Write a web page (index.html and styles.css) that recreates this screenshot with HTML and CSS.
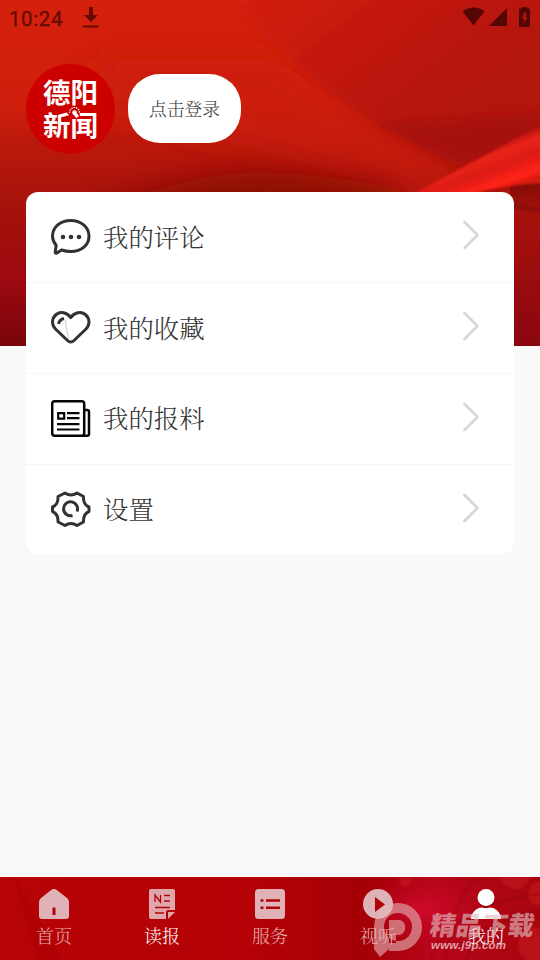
FILE: index.html
```html
<!DOCTYPE html>
<html lang="zh-CN">
<head>
<meta charset="utf-8">
<title>我的</title>
<link rel="stylesheet" href="styles.css">
</head>
<body>
<div class="app">
  <svg class="hero-art" viewBox="0 0 540 346" preserveAspectRatio="none" aria-hidden="true">
    <defs>
      <linearGradient id="base" x1="0" y1="0" x2="0" y2="1">
        <stop offset="0" stop-color="#d5210c"/><stop offset=".3" stop-color="#cf1f0c"/><stop offset=".41" stop-color="#bb190c"/><stop offset=".55" stop-color="#aa150b"/><stop offset=".68" stop-color="#a00e0b"/><stop offset=".8" stop-color="#9e0a10"/><stop offset="1" stop-color="#78050b"/>
      </linearGradient>
      <linearGradient id="sheet" gradientUnits="userSpaceOnUse" x1="270" y1="-20" x2="400" y2="150">
        <stop offset="0" stop-color="#d3200c"/><stop offset=".25" stop-color="#cb1b0b"/><stop offset=".7" stop-color="#ba150c"/><stop offset="1" stop-color="#b3120c"/>
      </linearGradient>
      <linearGradient id="right" x1="0" y1="0" x2="0" y2="1">
        <stop offset="0" stop-color="#7f0c08"/><stop offset=".2" stop-color="#a7110c"/><stop offset="1" stop-color="#8b0710"/>
      </linearGradient>
      <linearGradient id="ray" gradientUnits="userSpaceOnUse" x1="475" y1="150" x2="492" y2="195">
        <stop offset="0" stop-color="#b0130c"/><stop offset=".22" stop-color="#ea2218"/><stop offset=".5" stop-color="#dc1e12"/><stop offset=".85" stop-color="#ff2115"/><stop offset="1" stop-color="#d81b10"/>
      </linearGradient>
      <filter id="soft" x="-40%" y="-100%" width="180%" height="300%"><feGaussianBlur stdDeviation="16"/></filter>
      <filter id="blend" x="-20%" y="-20%" width="140%" height="140%"><feGaussianBlur stdDeviation="4"/></filter>
      <filter id="edge"><feGaussianBlur stdDeviation="1.2"/></filter>
    </defs>
    <rect width="540" height="346" fill="url(#base)"/>
    <path d="M100 60H275L375 124L463 168L430 200L260 150L100 110Z" fill="#cb1c0c" opacity=".7" filter="url(#soft)"/>
    <path d="M60 225Q160 180 250 172Q340 175 400 190V225Z" fill="#850b06" opacity=".85" filter="url(#soft)"/>
    <path d="M200-40Q270 55 360 115L490 185H600V-40Z" fill="url(#sheet)" filter="url(#blend)"/>
    <path d="M375 124Q460 120 550 112V165L463 168Z" fill="#9a0c0c" opacity=".45" filter="url(#blend)"/>
    <rect x="510" y="180" width="30" height="166" fill="url(#right)"/>
    <path d="M415 193L550 120V183Q480 185 450 205Z" fill="url(#ray)" filter="url(#edge)"/>
    <path d="M505 205Q525 207 545 213" fill="none" stroke="#790b07" stroke-width="4" opacity=".6" filter="url(#edge)"/>
    <path d="M508 263L545 242M508 309L545 290" stroke="#bd1510" opacity=".35" filter="url(#edge)"/>
  </svg>

  <div class="status">
    <span class="clock">10:24</span>
    <svg class="download" width="16" height="22" viewBox="0 0 16 22"><path d="M6 0h4v8h5l-7 7-7-7h5zM0 18.5h15.5v2H0z" fill="currentColor"/></svg>
    <svg class="signals" width="68" height="20" viewBox="0 0 68 20"><path d="M.5 4.3Q12-3.2 22.5 4.3L11.5 18.5zM45 1v18H27z" fill="currentColor"/><path fill-rule="evenodd" d="M60 1V0h5v1.5h2q1 0 1 1V19q0 1-1 1H58q-1 0-1-1V2.500q0-1 1-1h2zM62.300 5.500L60 11.500h2.200L61.500 17l4-7h-2l1-4.500z" fill="currentColor"/></svg>
  </div>

  <header class="profile">
    <div class="avatar"><span>德阳</span><span>新闻</span>
      <svg class="spark" width="13" height="11" viewBox="0 0 13 11"><circle cx="6.500" cy="6.500" r="2.300" fill="#fff"/><path d="M1.500 7L2 4L5 1.500H8L11 4L11.500 7" fill="none" stroke="#fff" stroke-width="1.200" stroke-dasharray="1.500 1"/></svg>
    </div>
    <button class="login">点击登录</button>
  </header>

  <main class="menu">
    <a class="row">
      <svg class="icon" width="40" height="38" viewBox="0 0 40 38" fill="none" stroke="#303233" stroke-width="3"><path d="M5.200 27.500C2.800 24.500 1.500 21.500 1.500 18C1.500 9 9.500 2.500 19.700 2.500S38 9 38 18S30.500 33.500 20 33.500Q15 33.500 10.500 32L5.500 35.300Q3.800 35.500 4.200 33.500Z" stroke-linejoin="round"/><g fill="#303233" stroke="none"><circle cx="12" cy="19" r="2.300"/><circle cx="20" cy="19" r="2.300"/><circle cx="28" cy="19" r="2.300"/></g></svg>
      <span class="label">我的评论</span>
      <svg class="chevron" width="18" height="30" viewBox="0 0 18 30"><path d="M2.500 2L15.500 15L2.500 28"/></svg>
    </a>
    <a class="row">
      <svg class="icon" width="40" height="38" viewBox="0 0 40 38" fill="none" stroke="#303233" stroke-width="3"><path d="M19.700 8.500C16 3.500 9.500 2 5.200 5.500C.3 9.500.5 16 4.500 20L16.500 31.500Q19.700 34.500 23 31.500L35 20C39 16 39.200 9.500 34.300 5.500C30 2 23.500 3.500 19.700 8.500Z" stroke-linejoin="round"/><path d="M7.500 15Q8.500 10.500 13 9.500" stroke-width="3"/><path d="M14 11L17.500 30" stroke="#999" stroke-width=".5"/></svg>
      <span class="label">我的收藏</span>
      <svg class="chevron" width="18" height="30" viewBox="0 0 18 30"><path d="M2.500 2L15.500 15L2.500 28"/></svg>
    </a>
    <a class="row">
      <svg class="icon" width="40" height="38" viewBox="0 0 40 38" fill="none" stroke="#050505" stroke-width="2.500"><rect x="1.200" y="1.300" width="32" height="34.500" rx="2.500"/><path d="M33.500 10H36Q38 10 38 12V34Q38 35.800 36 35.800H31"/><path d="M7.200 13.200H13.200V18.700H7.200ZM16 13.200H28.500M16 18.200H28.500M6 24.200H28.500M6 29.500H28.500" stroke-width="2.200"/></svg>
      <span class="label raised">我的报料</span>
      <svg class="chevron" width="18" height="30" viewBox="0 0 18 30"><path d="M2.500 2L15.500 15L2.500 28"/></svg>
    </a>
    <a class="row">
      <svg class="icon" width="40" height="38" viewBox="0 0 40 38" fill="none" stroke="#303233" stroke-width="3"><path d="M14 2Q20 6 26 2L32.500 5.500Q32 13.500 38 16V20.500Q32 23 32.500 31L26 34.500Q20 30.500 14 34.500L7 31Q7.500 23 1.500 20.500V16Q7.500 13.500 7 5.500Z" stroke-linejoin="round"/><path d="M21.500 24.500A7 7 0 1 1 26 20.500"/></svg>
      <span class="label raised">设置</span>
      <svg class="chevron" width="18" height="30" viewBox="0 0 18 30"><path d="M2.500 2L15.500 15L2.500 28"/></svg>
    </a>
  </main>

  <nav class="tabs">
    <svg class="tabs-art" viewBox="0 0 540 83" aria-hidden="true">
      <defs>
        <linearGradient id="bar"><stop offset="0" stop-color="#b60306"/><stop offset=".45" stop-color="#b50206"/><stop offset=".68" stop-color="#a40007"/><stop offset=".8" stop-color="#b8051a"/><stop offset="1" stop-color="#a8060e"/></linearGradient>
        <radialGradient id="pink"><stop offset="0" stop-color="#cf0a2c"/><stop offset="1" stop-color="#c30820" stop-opacity="0"/></radialGradient>
        <filter id="haze"><feGaussianBlur stdDeviation="1"/></filter>
      </defs>
      <rect width="540" height="83" fill="url(#bar)"/>
      <path d="M14 0L38 83H62Z" fill="#980204" opacity=".18"/>
      <ellipse cx="425" cy="32" rx="60" ry="32" fill="url(#pink)"/>
      <g filter="url(#haze)">
        <g fill="#e12d35" opacity=".28"><circle cx="515" cy="-3" r="15"/><circle cx="540" cy="17" r="12"/><circle cx="405" cy="3" r="6"/><circle cx="535" cy="68" r="17"/></g>
        <g fill="none" stroke="#6f0308" stroke-width="2" opacity=".3"><path d="M430 83Q455 25 540 17M465 83Q490 35 540 35M445 83Q460 0 485 0"/></g>
      </g>
    </svg>
    <a class="tab"><svg width="30" height="30" viewBox="0 0 30 30"><path fill-rule="evenodd" d="M12.500.8Q15-1 17.500.8L28.500 9.500Q30 11 30 13V27Q30 30 27 30H3Q0 30 0 27V13Q0 11 1.500 9.500ZM13.500 18.500H16.500V26H13.500Z" fill="#dfb2b7"/></svg><span>首页</span></a>
    <a class="tab lit"><svg width="30" height="30" viewBox="0 0 30 30"><path d="M4 0H26Q28 0 28 2V21H21Q19 21 19 23V30H4Q2 30 2 28V2Q2 0 4 0ZM21 23H28L21 30Z" fill="#dfa7ac"/><path d="M8 13V6L13.500 13V6M17 6.500H23M17 12H23M8 18.500H23M8 24H17" fill="none" stroke="#b50206" stroke-width="1.300"/></svg><span>读报</span></a>
    <a class="tab"><svg width="30" height="30" viewBox="0 0 30 30"><rect width="30" height="30" rx="3.500" fill="#dfb2b7"/><path d="M5.500 11.500H8.500M11 11.500H25M5.500 18.800H8.500M11 18.800H25" stroke="#af0306" stroke-width="2.500"/></svg><span>服务</span></a>
    <a class="tab"><svg width="30" height="30" viewBox="0 0 30 30"><circle cx="15" cy="15" r="15" fill="#dfb2b7"/><path d="M12 8V23L22 15.500Z" fill="#ad0308"/></svg><span>视听</span></a>
    <a class="tab on"><svg width="30" height="30" viewBox="0 0 30 30"><circle cx="15" cy="8.500" r="8.500" fill="#fff"/><path d="M0 30V27Q4 18.500 11 18.500Q15 20 19 18.500Q26 18.500 30 27V30Z" fill="#fff"/></svg><span>我的</span></a>
    <div class="watermark">
      <svg width="50" height="56" viewBox="0 0 50 56"><path fill-rule="evenodd" d="M7 54L1 46V24A24 24 0 1 1 25 48H16V46ZM25 10A14 14 0 1 0 25 38A14 14 0 0 0 25 10ZM16 17H27A8 8 0 0 1 27 32H23V40H16Z" fill="#e2b5b8" opacity=".6"/></svg>
      <div class="mark-text"><b>精品下载</b><i>www.j9p.com</i></div>
    </div>
  </nav>
</div>
</body>
</html>
```

FILE: styles.css
```css
* { box-sizing: border-box; }
body { margin: 0; background: #f9f9f9; }
.app {
  position: relative;
  width: 540px;
  height: 960px;
  display: flex;
  flex-direction: column;
  overflow: hidden;
  font-family: "Noto Serif CJK SC", "Noto Serif SC", "Noto Sans CJK SC", serif;
  font-weight: 300;
  color: #333;
}
.hero-art { position: absolute; top: 0; left: 0; width: 540px; height: 346px; }
.status {
  position: relative;
  height: 36px;
  padding: 0 10px 0 9px;
  display: flex;
  align-items: center;
  color: #650b04;
}
.clock { width: 74px; font: 400 20.5px/36px Roboto, sans-serif; letter-spacing: .6px; padding-top: 1px; -webkit-text-stroke: .3px #650b04; }
.signals { margin-left: auto; margin-bottom: 2px; color: #530604; }
.profile {
  position: relative;
  height: 156px;
  padding: 28px 26px 0;
  display: flex;
  align-items: flex-start;
  gap: 13px;
}
.avatar {
  position: relative;
  width: 89px;
  height: 90px;
  padding-top: 11px;
  border-radius: 50%;
  background: #cd0000;
  color: #fff;
  display: flex;
  flex-direction: column;
  align-items: center;
  font: 700 27.5px/33px "Noto Sans CJK SC", sans-serif;
}
.spark { position: absolute; left: 42px; top: 42px; }
.login {
  width: 113px;
  height: 69px;
  margin-top: 10px;
  padding: 0 0 1px;
  border: 0;
  border-radius: 32px;
  background: #fff;
  color: #333;
  font-family: inherit;
  font-weight: 300;
  font-size: 17.7px;
}
.menu {
  position: relative;
  height: 362px;
  margin: 0 26px;
  border-radius: 12px;
  background: #fff;
  display: grid;
  grid-template-rows: 91px 91px 91px 89px;
}
.row { display: flex; align-items: center; padding: 0 34px 0 25px; border-bottom: 1px solid #f6f6f6; }
.row:last-child { border-bottom: 0; }
.label { margin: 0 0 2px 12px; font-size: 25.4px; line-height: 36px; }
.label.raised { margin-bottom: 4px; }
.chevron { margin-left: auto; margin-bottom: 4px; fill: none; stroke: #d8d8d8; stroke-width: 2.8; stroke-linecap: round; stroke-linejoin: round; }
.tabs {
  position: relative;
  height: 83px;
  margin-top: auto;
  display: grid;
  grid-template-columns: repeat(5, 1fr);
}
.tabs-art { position: absolute; inset: 0; width: 540px; height: 83px; }
.tab {
  position: relative;
  padding-top: 12px;
  display: flex;
  flex-direction: column;
  align-items: center;
  gap: 3px;
  color: #e3aeb0;
  font-size: 18px;
  line-height: 26px;
}
.tab.lit, .tab.on { color: #fff; }
.watermark { position: absolute; left: 373px; top: 26px; display: flex; gap: 8px; }
.mark-text {
  display: flex;
  flex-direction: column;
  color: rgba(226, 190, 193, .65);
  font-family: "Noto Sans CJK SC", sans-serif;
  white-space: nowrap;
}
.mark-text b { font-size: 26px; line-height: 30px; font-weight: 900; transform: skewX(-9deg); padding-top: 6px; }
.mark-text i { font: italic 700 11.5px/12px "Liberation Sans", sans-serif; color: rgba(240, 215, 216, .75); letter-spacing: .2px; }
```
